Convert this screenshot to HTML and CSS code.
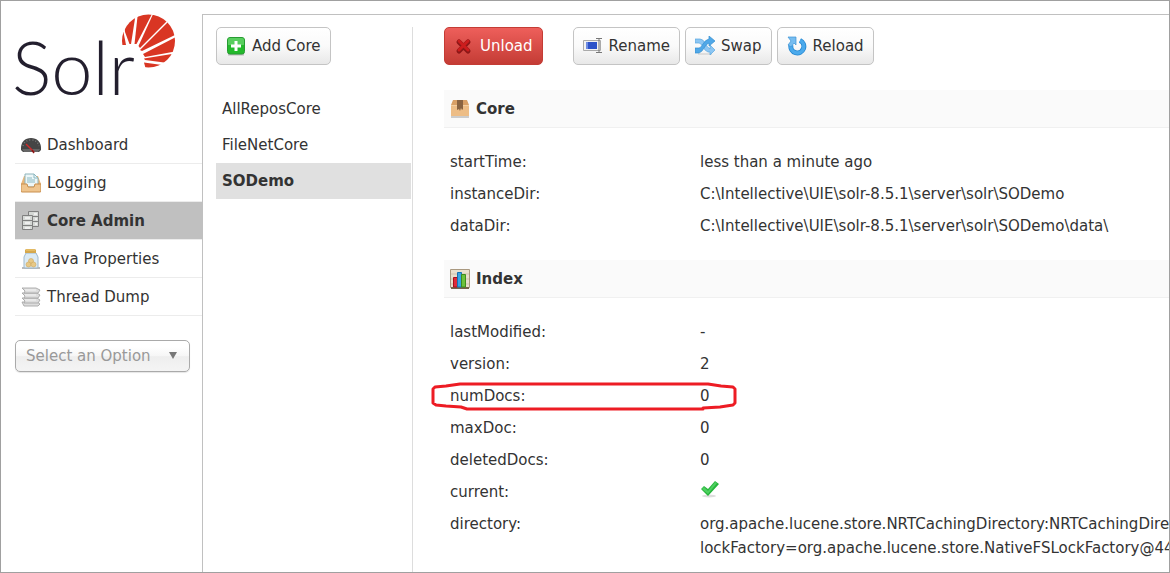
FILE: index.html
```html
<!DOCTYPE html>
<html lang="en">
<head>
<meta charset="utf-8">
<title>Solr Admin</title>
<link rel="stylesheet" href="styles.css">
</head>
<body>
<div class="app">
  <aside class="sidebar">
    <a class="logo" href="#" aria-label="Solr">
      <span class="logo-word">Solr</span>
      <svg class="logo-sun" viewBox="0 0 54 54" aria-hidden="true">
        <defs><clipPath id="sun"><circle cx="26.5" cy="27" r="26.5"/></clipPath></defs>
        <g clip-path="url(#sun)" fill="#d93623">
          <path d="M-1 18L1.500 18L4 31L-1 31Z"/>
          <path d="M2.500 12L14 -2L9 30L7.500 30L3 18Z"/>
          <path d="M16 -2L31 -2L14.500 30L12.500 30Z"/>
          <path d="M32 -2L40 -2L46 6L18 34L16.500 32Z"/>
          <path d="M47 7L56 12L55 20L20 37L18 36Z"/>
          <path d="M56 22L56 37L23 43L21 40Z"/>
          <path d="M56 39L46 49L23 46L22 44.500Z"/>
          <path d="M22 48.500L40 51L38 56L24 56Z"/>
        </g>
      </svg>
    </a>
    <nav class="nav">
      <a class="nav-item" href="#">
        <svg class="icon" viewBox="0 0 20 20"><path d="M0 13C0 7 4 3 10 3s10 4 10 10v2l-2 2H2l-2-2z" fill="#454545"/><path d="M2 11c1-4 4-6 8-6s7 2 8 6" fill="none" stroke="#777" stroke-width="1.5" stroke-dasharray="1 2"/><path d="M1 14h18l-2 3H3z" fill="#666"/><path d="M5 9l8 8" stroke="#d22a2a" stroke-width="1.500"/><path d="M11 15l2 3" stroke="#8b1515" stroke-width="1.500"/></svg>
        Dashboard</a>
      <a class="nav-item" href="#">
        <svg class="icon" viewBox="0 0 20 20"><path d="M3 3h14l3 8v8H0v-8z" fill="#e9b77a"/><path d="M4 1h9l4 4v9H4z" fill="#edf7f8" stroke="#8eb4bb"/><path d="M13 1v4h4M6 5h5M6 7h8M6 9h8" fill="none" stroke="#8bbac4"/><path d="M0 11h6l1 3h6l1-3h6v7q0 1-1 1H1q-1 0-1-1z" fill="#efc58e" stroke="#c98f4e"/></svg>
        Logging</a>
      <a class="nav-item active" href="#">
        <svg class="icon" viewBox="0 0 20 20"><g stroke="#808080" fill="#d5d8d5"><path d="M7.500.500h10v15h-10zM8 5.500h10M8 10.500h10"/><path d="M1.500 4.500h10v14h-10zM2 9.500h10M2 14.500h10"/></g><path d="M4 7h5M4 12h5M4 17h5M13 3h3M14 8h2M14 13h2" stroke="#efefef" stroke-width="2"/></svg>
        Core Admin</a>
      <a class="nav-item" href="#">
        <svg class="icon" viewBox="0 0 20 20"><path d="M1 19h18" stroke="#bbb" stroke-width="2"/><path d="M5 4h10l2 4v10q0 1-1 1H4q-1 0-1-1V8z" fill="#dbeaf4" stroke="#9eb8cb"/><path d="M5 0h9l1 1v3H4V1z" fill="#d6a84c"/><path d="M5 1h9" stroke="#f1cd7b"/><g fill="#e7c987" stroke="#cfa75c" stroke-width=".6"><circle cx="10" cy="12" r="2.500"/><circle cx="7.500" cy="15.500" r="2.500"/><circle cx="12.500" cy="15.500" r="2.500"/></g></svg>
        Java Properties</a>
      <a class="nav-item" href="#">
        <svg class="icon" viewBox="0 0 20 20"><g fill="#ddd" stroke="#a7a7a7" stroke-width=".9"><path d="M1 15h15l3 2-2 2H3z"/><path d="M1 11h15l3 2-2 3H3l1-2z"/><path d="M1 6h15l3 2-2 3H3l1-2z"/><path d="M1 1h14l4 2-2 3H3l1-2z"/></g><path d="M4 3h11M4 8h11M4 13h11" stroke="#f4f4f4"/></svg>
        Thread Dump</a>
    </nav>
    <div class="selector">
      <select class="core-select" aria-label="Core selector"><option>Select an Option</option></select>
      <svg class="arrow" viewBox="0 0 8 7" aria-hidden="true"><path d="M0 0h8L4 7z" fill="#777"/></svg>
    </div>
  </aside>

  <main class="panel">
    <section class="cores">
      <button class="btn" type="button">
        <svg class="icon" viewBox="0 0 20 20"><path d="M2 18h16" stroke="#bbb" stroke-width="3"/><rect x="1.500" y="1.500" width="17" height="16.500" rx="2.500" fill="#23b92b" stroke="#279b32"/><path d="M2 9h16V4q0-2-2-2H4Q2 2 2 4z" fill="#58ce5e"/><path d="M10 5v10M5 10h10" stroke="#fff" stroke-width="3"/></svg>
        Add Core</button>
      <nav class="core-list">
        <a class="core-item" href="#">AllReposCore</a>
        <a class="core-item" href="#">FileNetCore</a>
        <a class="core-item current" href="#">SODemo</a>
      </nav>
    </section>

    <section class="details">
      <div class="actions">
        <button class="btn danger" type="button">
          <svg class="icon" viewBox="0 0 20 20"><path d="M5 6l9 9M14 6l-9 9" stroke="#8d1717" stroke-width="5" stroke-linecap="round"/><path d="M5 5l9 9M14 5l-9 9" stroke="#cc1d1d" stroke-width="3" stroke-linecap="round"/></svg>
          Unload</button>
        <button class="btn" type="button">
          <svg class="icon" viewBox="0 0 20 20"><path d="M.5 4.500h17v10H.5z" fill="#f2f2f2" stroke="#aaa"/><path d="M3 6h11v7H3z" fill="#2d53c9"/><path d="M3 6h2v7H3z" fill="#6f8ce2"/><path d="M13 2.500h6M16 3v14M13 16.500h6" fill="none" stroke="#777"/></svg>
          Rename</button>
        <button class="btn" type="button">
          <svg class="icon" viewBox="0 0 20 20"><path d="M3 18h14" stroke="#ddd" stroke-width="2"/><path d="M0 3h5q3 0 5 4t5 6V9l5 5-5 5v-3h-2q-3-1-5-5T4 7H0z" fill="#8cc6f3" stroke="#5aa8e0" stroke-width=".7"/><path d="M0 12h4q2 0 4-4t6-5V0l6 5-6 5V7q-3 1-5 5t-5 5H0z" fill="#50a8e8" stroke="#338fd0" stroke-width=".7"/></svg>
          Swap</button>
        <button class="btn" type="button">
          <svg class="icon" viewBox="0 0 20 20"><path d="M13 4.500A6.500 6.500 0 1 1 4 9" fill="none" stroke="#2487d2" stroke-width="5"/><path d="M13 4.500A6.500 6.500 0 1 1 4 9" fill="none" stroke="#4baaec" stroke-width="3.500"/><path d="M1 1h8v8L7 7l-3 4-3-2 3-4z" fill="#77bdf0" stroke="#3c94d6" stroke-width=".7"/></svg>
          Reload</button>
      </div>

      <h2 class="heading">
        <svg class="icon" viewBox="0 0 20 20"><path d="M1 18h18" stroke="#ccc" stroke-width="2"/><path d="M3 1h14l2 5v11H1V6z" fill="#d9a066"/><path d="M1 7h18v10H1z" fill="#edbd86"/><path d="M1 6.500h18" stroke="#f4d0a2"/><path d="M7 1h6v9l-1 1-1-2-1 3-1-2-2 1z" fill="#896341"/></svg>
        Core</h2>
      <dl class="props">
        <div class="row"><dt>startTime:</dt><dd>less than a minute ago</dd></div>
        <div class="row"><dt>instanceDir:</dt><dd>C:\Intellective\UIE\solr-8.5.1\server\solr\SODemo</dd></div>
        <div class="row"><dt>dataDir:</dt><dd>C:\Intellective\UIE\solr-8.5.1\server\solr\SODemo\data\</dd></div>
      </dl>

      <h2 class="heading">
        <svg class="icon" viewBox="0 0 20 20"><path d="M.5.500h19v18H.5z" fill="#e8dfcd" stroke="#a99980"/><path d="M1 5h18M1 10h18M1 15h18" stroke="#cfc3ad"/><path d="M1 19h18" stroke="#75644c" stroke-width="2"/><path d="M3.500 8.500h4V18h-4z" fill="#e02c39" stroke="#a7111d"/><path d="M7.500 3.500h4V18h-4z" fill="#38a4e4" stroke="#1672b2"/><path d="M11.500 5.500h4V18h-4z" fill="#6cc23d" stroke="#3f8c1c"/></svg>
        Index</h2>
      <dl class="props">
        <div class="row"><dt>lastModified:</dt><dd>-</dd></div>
        <div class="row"><dt>version:</dt><dd>2</dd></div>
        <div class="row marked"><dt>numDocs:</dt><dd>0</dd>
          <svg class="marker" viewBox="0 0 306 30" aria-hidden="true"><path d="M2 8L4 6L15 5L29 3L277 3L290 5L302 6L304 8L304 22L302 24L289 26L272 27L272 28L36 28L30 26L15 25L5 24L2 22Z" fill="none" stroke="#ed1c24" stroke-width="3" stroke-linejoin="round"/></svg>
        </div>
        <div class="row"><dt>maxDoc:</dt><dd>0</dd></div>
        <div class="row"><dt>deletedDocs:</dt><dd>0</dd></div>
        <div class="row"><dt>current:</dt><dd><svg class="tick" viewBox="0 0 20 20" role="img" aria-label="yes"><ellipse cx="9" cy="16" rx="7" ry="1.500" fill="#ddd"/><path d="M1 9l3-3 4 3 7-8 4 3L8 16z" fill="#27b53c"/><path d="M2 9l2-2 4 4 7-9 2 1-9 11z" fill="#4ed060"/></svg></dd></div>
        <div class="row"><dt>directory:</dt><dd>org.apache.lucene.store.NRTCachingDirectory:NRTCachingDirectory<br>lockFactory=org.apache.lucene.store.NativeFSLockFactory@44</dd></div>
      </dl>
    </section>
  </main>
</div>
</body>
</html>
```
FILE: styles.css
```css
* { box-sizing: border-box; }

body {
  margin: 0;
  background: #fff;
  color: #333;
  font: 15px/24px Verdana, "DejaVu Sans", sans-serif;
}

a { color: inherit; text-decoration: none; }

.app {
  display: flex;
  min-height: 100vh;
  padding-top: 13px;
  border: 1px solid #a0a0a0;
  overflow: hidden;
}

.sidebar {
  flex: 0 0 201px;
  padding-left: 14px;
}

.logo {
  display: block;
  position: relative;
  height: 112px;
  color: #231f2e;
}

.logo-word {
  display: block;
  margin-left: -3px;
  padding-top: 16px;
  font: 300 74px/74px Lato, sans-serif;
}

.logo-sun {
  position: absolute;
  top: 0;
  left: 107px;
  width: 54px;
  height: 54px;
}

.nav-item {
  display: flex;
  align-items: center;
  gap: 6px;
  height: 38px;
  padding-left: 6px;
  border-bottom: 1px solid #ececec;
}

.nav-item.active {
  background: #c0c0c0;
  background-clip: padding-box;
  font-weight: bold;
}

.icon {
  flex: none;
  width: 20px;
  height: 20px;
}

.selector {
  position: relative;
  margin: 24px 12px 0 0;
}

.core-select {
  display: block;
  width: 100%;
  height: 32px;
  padding: 0 10px;
  appearance: none;
  border: 1px solid #aaa;
  border-radius: 5px;
  background: linear-gradient(#fff 20%, #f6f6f6 50%, #eee 52%, #f4f4f4);
  box-shadow: 0 1px 1px rgba(0, 0, 0, .1);
  color: #999;
  font: inherit;
}

.arrow {
  position: absolute;
  top: 12px;
  right: 13px;
  width: 8px;
  height: 7px;
  pointer-events: none;
}

.panel {
  display: flex;
  flex: 1;
  min-width: 0;
  padding: 12px 0 0 13px;
  border: solid #c0c0c0;
  border-width: 1px 0 0 1px;
}

.cores {
  flex: 0 0 197px;
  padding-right: 1px;
  border-right: 1px solid #ddd;
}

.btn {
  display: inline-flex;
  align-items: center;
  gap: 6px;
  height: 38px;
  padding: 0 9px;
  border: 1px solid #c4c4c4;
  border-radius: 5px;
  background: linear-gradient(#fff, #fafafa 50%, #e8e8e8);
  color: #333;
  font: inherit;
  white-space: nowrap;
}

.danger {
  margin-right: 25px;
  border-color: #c43c35;
  background: linear-gradient(#ee5f5b, #c43c35);
  color: #fff;
}

.core-list { margin-top: 26px; }

.core-item {
  display: block;
  padding: 6px;
}

.core-item.current {
  background: #e0e0e0;
  font-weight: bold;
}

.details {
  flex: 1;
  min-width: 0;
  padding-left: 31px;
}

.actions {
  display: flex;
  gap: 5px;
  margin-bottom: 25px;
}

.heading {
  display: flex;
  align-items: center;
  gap: 6px;
  height: 38px;
  margin: 0;
  padding-left: 6px;
  border-bottom: 1px solid #f0f0f0;
  background: #fafafa;
  font-size: 15px;
}

.props {
  margin: 0;
  padding: 18px 0 18px 6px;
}

.props:last-child { padding-bottom: 0; }

.row {
  display: grid;
  grid-template-columns: 250px 1fr;
  position: relative;
  padding: 4px 0;
  white-space: nowrap;
}

.row dd {
  min-width: 0;
  margin: 0;
}

.tick {
  display: block;
  width: 20px;
  height: 20px;
}

.marker {
  position: absolute;
  top: 1px;
  left: -19px;
  width: 306px;
  height: 30px;
}
```
